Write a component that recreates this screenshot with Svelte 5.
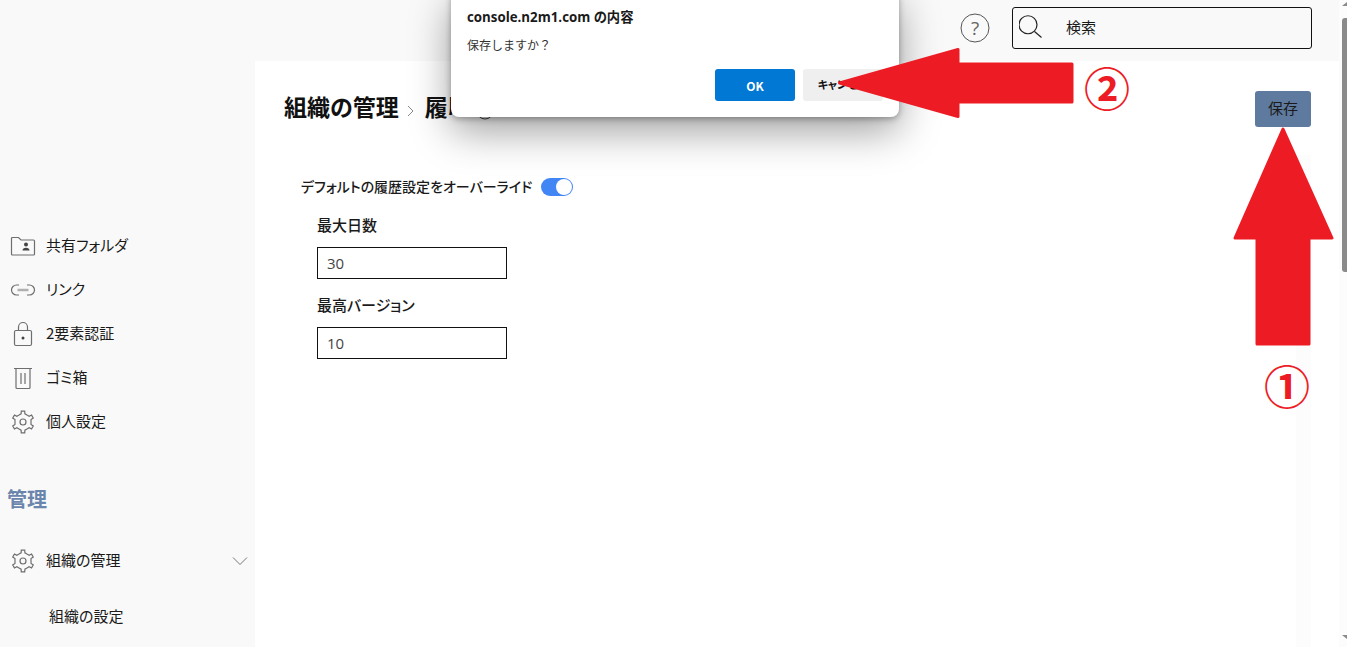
<script>
	const navItems = [
		{ label: '共有フォルダ', icon: 'folder' },
		{ label: 'リンク', icon: 'link' },
		{ label: '2要素認証', icon: 'lock' },
		{ label: 'ゴミ箱', icon: 'trash' },
		{ label: '個人設定', icon: 'gear' }
	];

	// six toothed outline, one tooth pointing straight up
	function gearPath() {
		const pts = [];
		for (let i = 0; i < 6; i++) {
			const a = (i * 60 - 90) * (Math.PI / 180);
			for (const [off, r] of [[-30, 8], [-13, 8.4], [-9, 11], [9, 11], [13, 8.4]]) {
				const t = a + off * (Math.PI / 180);
				pts.push(`${(12 + r * Math.cos(t)).toFixed(2)} ${(12 + r * Math.sin(t)).toFixed(2)}`);
			}
		}
		return 'M' + pts.join('L') + 'Z';
	}
	const gear = gearPath();
</script>

{#snippet icon(name)}
	{#if name === 'folder'}
		<svg width="26" height="20" viewBox="0 0 26 20">
			<path d="M1.500 2.500a1 1 0 0 1 1-1h6l2.500 2.500h12.500a1 1 0 0 1 1 1v13a1 1 0 0 1-1 1h-21a1 1 0 0 1-1-1z" />
			<circle class="solid" cx="16" cy="8.500" r="2" />
			<path class="solid" d="M12.500 14.500c0-1.800 1.500-2.800 3.500-2.800s3.500 1 3.500 2.800z" />
		</svg>
	{:else if name === 'link'}
		<svg width="26" height="14" viewBox="0 0 26 14">
			<path d="M9 2H6.500a5 5 0 0 0 0 10H9M17 2h2.500a5 5 0 0 1 0 10H17" />
			<path class="thick" d="M7.500 7h11" />
		</svg>
	{:else if name === 'lock'}
		<svg width="20" height="26" viewBox="0 0 20 26">
			<rect x="1.500" y="9.500" width="17" height="15" rx="1.500" />
			<path d="M5.500 9.500V6a4.500 4.500 0 0 1 9 0v3.500" />
			<circle class="solid" cx="10" cy="17" r="1.500" />
		</svg>
	{:else if name === 'trash'}
		<svg width="20" height="24" viewBox="0 0 20 24">
			<path d="M1 2.500h18M3 2.500v19a1 1 0 0 0 1 1h12a1 1 0 0 0 1-1v-19M8 7v11M12 7v11" />
		</svg>
	{:else if name === 'gear'}
		<svg width="24" height="24" viewBox="0 0 24 24">
			<path d={gear} />
			<circle cx="12" cy="12" r="3" />
		</svg>
	{/if}
{/snippet}

<div class="page">
	<aside class="sidebar">
		<ul class="nav">
			{#each navItems as item}
				<li class="nav-item">
					<span class="nav-icon">{@render icon(item.icon)}</span>
					<span class="nav-label">{item.label}</span>
				</li>
			{/each}
		</ul>
		<h2 class="section">管理</h2>
		<div class="nav-item org">
			<span class="nav-icon">{@render icon('gear')}</span>
			<span class="nav-label grow">組織の管理</span>
			<svg class="chevron" width="16" height="8" viewBox="0 0 16 8"><path d="M1 .5l7 7 7-7" /></svg>
		</div>
		<div class="sub-item">組織の設定</div>
	</aside>

	<div class="content">
		<header class="topbar">
			<svg class="help" width="30" height="30" viewBox="0 0 30 30">
				<circle cx="15" cy="15" r="14" />
				<text x="15" y="21.500" text-anchor="middle">?</text>
			</svg>
			<div class="search">
				<svg width="26" height="28" viewBox="0 0 26 28">
					<circle cx="9" cy="13.750" r="9" />
					<path d="M15.500 20.500l7 6" />
				</svg>
				<span class="search-text">検索</span>
			</div>
		</header>

		<main class="main">
			<div class="title-row">
				<h1 class="title">
					<span>組織の管理</span>
					<svg class="crumb" width="7" height="12" viewBox="0 0 7 12"><path d="M1 1l5 5-5 5" /></svg>
					<span>履</span><span class="cut">歴</span>
					<svg class="title-help" width="18" height="18" viewBox="0 0 18 18"><circle cx="9" cy="9" r="8" /></svg>
				</h1>
				<button class="save">保存</button>
			</div>

			<div class="form">
				<div class="toggle-row">
					<span class="toggle-text">デフォルトの履歴設定をオーバーライド</span>
					<span class="toggle"><span class="knob"></span></span>
				</div>
				<div class="field">
					<div class="field-label">最大日数</div>
					<div class="input">30</div>
				</div>
				<div class="field">
					<div class="field-label">最高バージョン</div>
					<div class="input">10</div>
				</div>
			</div>
			<div class="strip"></div>
		</main>
	</div>

	<div class="scrollbar">
		<span class="tri up"></span>
		<span class="thumb"></span>
		<span class="tri down"></span>
	</div>

	<div class="dialog">
		<div class="dialog-title">console.n2m1.com の内容</div>
		<div class="dialog-msg">保存しますか？</div>
		<div class="dialog-actions">
			<button class="btn ok">OK</button>
			<button class="btn cancel">キャンセル</button>
		</div>
	</div>

	<!-- red annotations pasted over the capture -->
	<svg class="arrows" width="1347" height="647" viewBox="0 0 1347 647">
		<path d="M839.500 83L958 49.500V64H1072V102H958V116.500Z" />
		<path d="M1283 129L1332 238H1309V344H1257V238H1235Z" />
	</svg>
	<span class="mark mark-1">①</span>
	<span class="mark mark-2">②</span>
</div>

<style>
	:global(html), :global(body) {
		margin: 0;
		overflow: hidden;
	}

	.page {
		position: relative;
		display: flex;
		height: 647px;
		overflow: hidden;
		background: #f9f9f9;
		color: #1a1a1a;
		font-family: "Noto Sans CJK JP", "Open Sans", sans-serif;
		font-feature-settings: "palt";
	}

	.sidebar {
		width: 255px;
		flex: none;
		padding-top: 224px;
		box-sizing: border-box;
	}

	.nav {
		list-style: none;
		margin: 0;
		padding: 0;
	}

	.nav-item {
		display: flex;
		align-items: center;
		height: 44px;
		font-size: 15px;
	}

	.nav-label {
		margin-top: -3px;
	}

	.nav-icon {
		width: 46px;
		padding-left: 9px;
		box-sizing: border-box;
		display: flex;
		align-items: center;
		justify-content: center;
		padding-right: 10px;
		flex: none;
	}

	.nav-icon svg {
		fill: none;
		stroke: #6e6e6e;
		stroke-width: 1.2;
	}

	.nav-icon .solid {
		fill: #444;
		stroke: none;
	}

	.nav-icon .thick {
		stroke: #b0b0b0;
		stroke-width: 2.500;
	}

	.section {
		margin: 42px 0 0 7px;
		font-size: 20px;
		line-height: 26px;
		font-weight: 700;
		color: #6b86ad;
	}

	.org {
		margin-top: 27px;
	}

	.grow {
		flex: 1;
	}

	.chevron {
		margin-right: 7px;
		fill: none;
		stroke: #777;
	}

	.sub-item {
		margin: 22px 0 0 49px;
		font-size: 15px;
		line-height: 22px;
	}

	.content {
		flex: 1;
		display: flex;
		flex-direction: column;
		min-width: 0;
	}

	.topbar {
		height: 61px;
		flex: none;
		display: flex;
		align-items: flex-start;
		justify-content: flex-end;
		gap: 22px;
		padding: 7px 27px 0 0;
		box-sizing: border-box;
	}

	.help {
		margin-top: 6px;
		fill: none;
		stroke: #555;
	}

	.help text {
		font-family: "Open Sans", sans-serif;
		font-size: 19px;
		fill: #666;
		stroke: none;
	}

	.search {
		width: 300px;
		height: 42px;
		box-sizing: border-box;
		border: 1.500px solid #111;
		border-radius: 3px;
		display: flex;
		align-items: center;
		gap: 21px;
		padding-left: 6px;
		font-size: 15px;
	}

	.search svg {
		margin-top: -6px;
		fill: none;
		stroke: #222;
		stroke-width: 1.200;
	}

	.search-text {
		margin-top: -3px;
	}

	.main {
		position: relative;
		flex: 1;
		background: #fff;
		padding: 30px 28px 0 29px;
	}

	.title-row {
		display: flex;
		align-items: center;
		justify-content: space-between;
		height: 36px;
	}

	.title {
		margin: -6px 0 0;
		display: flex;
		align-items: center;
		font-size: 23px;
		font-weight: 700;
		color: #111;
	}

	/* only the sliver above the dialog's lower edge shows in the capture */
	.cut {
		clip-path: inset(0 0 8px 0);
	}

	.crumb {
		margin: 9px 11px 0 8px;
		fill: none;
		stroke: #888;
	}

	.title-help {
		margin: 10px 0 0 5px;
		fill: none;
		stroke: #444;
	}

	.save {
		width: 56px;
		height: 36px;
		padding: 0 0 3px;
		border: 0;
		border-radius: 3px;
		background: #5f7a9f;
		color: #1a1a1a;
		font: inherit;
		font-size: 15px;
	}

	.form {
		margin-top: 48px;
		padding-left: 17px;
		position: relative;
		z-index: 1;
	}

	.toggle-row {
		display: flex;
		align-items: center;
		gap: 9px;
		height: 24px;
		font-size: 14px;
		font-weight: 500;
	}

	.toggle-text {
		margin-top: -3px;
	}

	.toggle {
		width: 32px;
		height: 18px;
		border-radius: 9px;
		background: #4285f4;
		position: relative;
	}

	.knob {
		position: absolute;
		right: 1px;
		top: 1px;
		width: 16px;
		height: 16px;
		border-radius: 50%;
		background: #fff;
	}

	.field {
		padding-left: 16px;
		margin-top: 15px;
	}

	.field-label {
		font-size: 15px;
		font-weight: 500;
		line-height: 22px;
		margin-bottom: 11px;
	}

	.input {
		width: 190px;
		height: 32px;
		box-sizing: border-box;
		border: 1.500px solid #111;
		background: #fff;
		display: flex;
		align-items: center;
		padding-left: 9px;
		font-family: "Open Sans", sans-serif;
		font-size: 15px;
		color: #444;
	}

	.strip {
		position: absolute;
		top: 94px;
		bottom: 0;
		right: 28px;
		width: 15px;
		background: #fcfcfc;
	}

	.scrollbar {
		width: 8px;
		flex: none;
		background: #fcfcfc;
		display: flex;
		flex-direction: column;
		align-items: flex-end;
	}

	.thumb {
		width: 5px;
		height: 254px;
		margin: 12px 0 auto;
		border-radius: 3px 0 0 3px;
		background: #8a8a8a;
	}

	.tri {
		width: 0;
		height: 0;
		border-left: 5px solid transparent;
	}

	.tri.up {
		margin-top: 2px;
		border-bottom: 4px solid #8a8a8a;
	}

	.tri.down {
		margin-bottom: 8px;
		border-top: 4px solid #8a8a8a;
	}

	.dialog {
		position: absolute;
		left: 451px;
		top: -10px;
		width: 448px;
		height: 127px;
		box-sizing: border-box;
		padding: 18px 16px 0;
		background: #fff;
		border-radius: 8px;
		box-shadow: 0 14px 40px rgba(0, 0, 0, 0.38), 0 2px 6px rgba(0, 0, 0, 0.3);
		z-index: 2;
	}

	.dialog-title {
		font-family: "Open Sans", "Noto Sans CJK JP", sans-serif;
		font-size: 13.300px;
		font-weight: 700;
		line-height: 18px;
	}

	.dialog-msg {
		margin-top: 10px;
		font-size: 12px;
		line-height: 18px;
		color: #333;
		font-feature-settings: normal;
	}

	.dialog-actions {
		display: flex;
		gap: 8px;
		margin-top: 15px;
	}

	.btn {
		width: 80px;
		height: 32px;
		padding: 0;
		border: 0;
		border-radius: 3px;
		font: inherit;
		font-size: 12px;
		font-weight: 700;
	}

	.ok {
		margin-left: 248px;
		background: #0078d4;
		color: #fff;
	}

	.cancel {
		background: #efefef;
		color: #111;
		font-size: 11px;
		padding-bottom: 2px;
	}

	.arrows {
		position: absolute;
		left: 0;
		top: 0;
		z-index: 3;
		fill: #ed1c24;
		stroke: #ed1c24;
		stroke-width: 3;
		stroke-linejoin: round;
	}

	.mark {
		position: absolute;
		z-index: 3;
		width: 50px;
		text-align: center;
		color: #ed1c24;
		font-size: 46px;
		line-height: 50px;
		font-weight: 700;
	}

	.mark-1 {
		left: 1262px;
		top: 359px;
	}

	.mark-2 {
		left: 1082px;
		top: 61px;
	}
</style>
